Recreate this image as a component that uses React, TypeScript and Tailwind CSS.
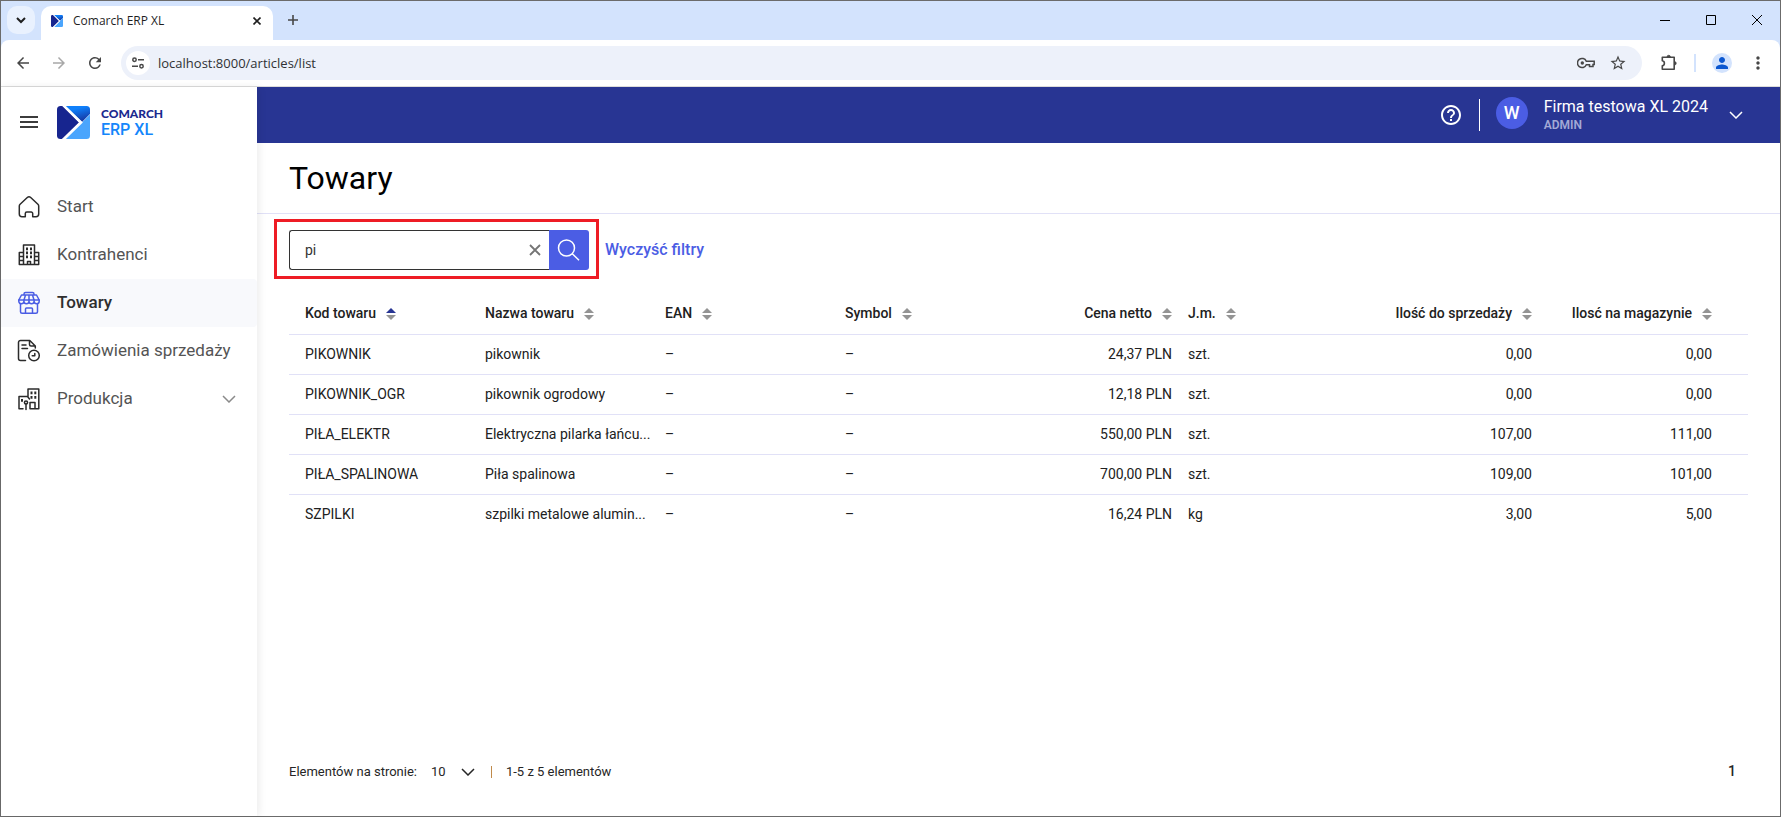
import { useState } from "react";
import type { ReactNode } from "react";
import {
  MdArrowBack,
  MdArrowForward,
  MdRefresh,
  MdStarOutline,
  MdPerson,
  MdMoreVert,
  MdHelpOutline,
} from "react-icons/md";

function Logo({ size }: { size: number }) {
  return (
    <svg width={size} height={size} viewBox="0 0 33 33" aria-hidden="true">
      <defs>
        <linearGradient id="logoTop" x1="0.3" y1="0" x2="0.7" y2="1">
          <stop offset="0.2" stopColor="#0f80fb" />
          <stop offset="1" stopColor="#16319a" />
        </linearGradient>
        <clipPath id="logoClip">
          <rect width="33" height="33" rx="3.5" />
        </clipPath>
      </defs>
      <g clipPath="url(#logoClip)">
        <path d="M8 0H33V8L25 16Z" fill="url(#logoTop)" />
        <path d="M8 33L33 8.500V33Z" fill="#4aa5fd" />
        <path d="M-1 -2H4L22 16.500L4 34H-1Z" fill="#17258f" />
        <path d="M4 -3L24 16.500L4 36" fill="none" stroke="#fff" strokeWidth="2.600" />
      </g>
    </svg>
  );
}

function Chevron({ className }: { className: string }) {
  return (
    <svg className={className} width="14" height="8" viewBox="0 0 14 8" fill="none" stroke="currentColor" strokeWidth="1.500" aria-hidden="true">
      <path d="M1 1L7 7L13 1" />
    </svg>
  );
}

function NavIcon({ children, className }: { children: ReactNode; className: string }) {
  return (
    <svg className={className} width="24" height="24" viewBox="0 0 24 24" fill="none" stroke="currentColor" strokeWidth="1.500" strokeLinejoin="round" strokeLinecap="round" aria-hidden="true">
      {children}
    </svg>
  );
}

const homeIcon = (
  <path d="M10.300 2.500a2.500 2.500 0 0 1 3.400 0l7.200 6.800a2.500 2.500 0 0 1 .8 1.900V19a2.700 2.700 0 0 1-2.700 2.700h-3.300V18.500a1.500 1.500 0 0 0-1.500-1.500h-4.400a1.500 1.500 0 0 0-1.500 1.500v3.200H5A2.700 2.700 0 0 1 2.300 19v-7.800a2.500 2.500 0 0 1 .8-1.900z" />
);
const officeIcon = (
  <>
    <path d="M6.500 21.500V2h11v19.500M6.500 9.500H2.300v12h19.400v-12h-4.200M2.300 13.500h4.200M2.300 17.500h4.200M17.500 13.500h4.200M17.500 17.500h4.200M10.500 21v-2.500h3V21" />
    <path d="M10 5.500v.8M14 5.500v.8M10 9.500v.8M14 9.500v.8M10 13.500v.8M14 13.500v.8" strokeWidth="2" strokeLinecap="square" />
  </>
);
const shopIcon = (
  <>
    <path d="M7 3.500V3A1.500 1.500 0 0 1 8.500 1.500h7A1.500 1.500 0 0 1 17 3v.5M4.500 4h15l2.700 5h-20.400zM8.500 4L7 9M12 4v5M15.500 4L17 9" />
    <path d="M1.800 9v1.300a2.550 2.550 0 0 0 5.100 0V9M6.900 10.300a2.550 2.550 0 0 0 5.100 0V9M12 10.300a2.550 2.550 0 0 0 5.100 0V9M17.100 10.300a2.550 2.550 0 0 0 5.100 0V9" />
    <path d="M3.500 13v7.700a1.500 1.500 0 0 0 1.500 1.500h14a1.500 1.500 0 0 0 1.500-1.500v-7.700M8.500 22v-4a1 1 0 0 1 1-1h5a1 1 0 0 1 1 1v4" />
  </>
);
const orderIcon = (
  <>
    <path d="M8.500 21.500H3.500a2 2 0 0 1-2-2v-16a2 2 0 0 1 2-2h9.300l5.500 5.500v2M12.500 1.800v3.700a1.500 1.500 0 0 0 1.500 1.500h4M5 6h4M5 9.500h5.500" />
    <circle cx="17" cy="16.500" r="5.300" />
    <path d="M17.800 14.500v2.300h-2.600" />
  </>
);
const factoryIcon = (
  <>
    <path d="M11 9.500V2h10.800v19.700H13V15.500h5v6M6 21.700H2V9.500h8.500l2 2.500M9 22.500v-6" />
    <circle cx="9" cy="15.500" r="1.600" />
    <path d="M14.500 5.500v.8M18.300 5.500v.8M14.500 10v.8M18.300 10v.8M5 13v.8" strokeWidth="2" strokeLinecap="square" />
  </>
);

const navItems = [
  { label: "Start", icon: homeIcon },
  { label: "Kontrahenci", icon: officeIcon },
  { label: "Towary", icon: shopIcon, active: true },
  { label: "Zamówienia sprzedaży", icon: orderIcon },
  { label: "Produkcja", icon: factoryIcon, expandable: true },
];

const columns = [
  { label: "Kod towaru", width: "w-[188px]", sorted: true },
  { label: "Nazwa towaru", width: "w-[180px]" },
  { label: "EAN", width: "w-[180px]" },
  { label: "Symbol", width: "w-auto" },
  { label: "Cena netto", width: "w-[163px]", right: true },
  { label: "J.m.", width: "w-[180px]" },
  { label: "Ilość do sprzedaży", width: "w-[180px]", right: true },
  { label: "Ilosć na magazynie", width: "w-[208px]", right: true },
];

const rows = [
  ["PIKOWNIK", "pikownik", "–", "–", "24,37 PLN", "szt.", "0,00", "0,00"],
  ["PIKOWNIK_OGR", "pikownik ogrodowy", "–", "–", "12,18 PLN", "szt.", "0,00", "0,00"],
  ["PIŁA_ELEKTR", "Elektryczna pilarka łańcu...", "–", "–", "550,00 PLN", "szt.", "107,00", "111,00"],
  ["PIŁA_SPALINOWA", "Piła spalinowa", "–", "–", "700,00 PLN", "szt.", "109,00", "101,00"],
  ["SZPILKI", "szpilki metalowe alumin...", "–", "–", "16,24 PLN", "kg", "3,00", "5,00"],
];

function BrowserChrome() {
  return (
    <div className="font-['Open_Sans',sans-serif]">
      <div className="flex h-[39px] items-start bg-[#d3e3fd] pt-[5px]">
        <button aria-label="Szukaj kart" className="ml-[6px] flex size-7 items-center justify-center rounded-[10px] bg-[#e9f1fe] text-[#1f1f1f]">
          <svg width="10" height="7" viewBox="0 0 10 7" fill="none" stroke="currentColor" strokeWidth="2"><path d="M1 1L5 5L9 1" /></svg>
        </button>
        <div className="ml-[6px] flex h-[34px] w-[232px] items-center rounded-t-[10px] bg-white pr-[10px] pb-[5px] pl-[10px]">
          <Logo size={12} />
          <span className="ml-[10px] flex-1 text-xs text-[#1f1f1f]">Comarch ERP XL</span>
          <button aria-label="Zamknij kartę" className="flex size-3 items-center justify-center text-[#1f1f1f]">
            <svg width="8" height="8" viewBox="0 0 8 8" stroke="currentColor" strokeWidth="1.600"><path d="M0.500 0.500L7.500 7.500M7.500 0.500L0.500 7.500" /></svg>
          </button>
        </div>
        <button aria-label="Nowa karta" className="ml-[6px] flex size-7 items-center justify-center text-[#474747]">
          <svg width="10" height="10" viewBox="0 0 10 10" stroke="currentColor" strokeWidth="1.600"><path d="M5 0V10M0 5H10" /></svg>
        </button>
        <div className="ml-auto flex h-7 text-black">
          <button aria-label="Minimalizuj" className="flex w-[46px] items-center justify-center">
            <svg width="10" height="10" viewBox="0 0 10 10" stroke="currentColor"><path d="M0 5.500H10" /></svg>
          </button>
          <button aria-label="Maksymalizuj" className="flex w-[46px] items-center justify-center">
            <svg width="10" height="10" viewBox="0 0 10 10" stroke="currentColor" fill="none"><path d="M0.500 0.500H9.500V9.500H0.500Z" /></svg>
          </button>
          <button aria-label="Zamknij" className="flex w-[46px] items-center justify-center">
            <svg width="10" height="10" viewBox="0 0 10 10" stroke="currentColor"><path d="M0 0L10 10M10 0L0 10" /></svg>
          </button>
        </div>
      </div>
      <div className="bg-[#d3e3fd]">
        <div className="flex h-[47px] items-center rounded-t-[8px] border-b border-[#dcdcdc] bg-white pr-3 pl-[13px] text-[#474747]">
          <button aria-label="Wstecz"><MdArrowBack size={18} /></button>
          <button aria-label="Dalej" className="ml-[18px] text-[#a8a8a8]"><MdArrowForward size={18} /></button>
          <button aria-label="Odśwież" className="ml-[18px]"><MdRefresh size={18} /></button>
          <div className="ml-[17px] flex h-[34px] flex-1 items-center rounded-full bg-[#edf1fa] pr-[15px] pl-[5px]">
            <button aria-label="Informacje o witrynie" className="flex size-6 items-center justify-center rounded-full bg-white">
              <svg width="12" height="12" viewBox="0 0 12 12" fill="none" stroke="currentColor" strokeWidth="1.500">
                <circle cx="2.500" cy="2.800" r="1.700" /><path d="M6 2.800H12M0 9.200H6" /><circle cx="9.500" cy="9.200" r="1.700" />
              </svg>
            </button>
            <input aria-label="Adres" defaultValue="localhost:8000/articles/list" className="ml-2 min-w-0 flex-1 bg-transparent pt-px text-[13px] text-[#303134] outline-none" />
            <button aria-label="Hasła">
              <svg width="18" height="12" viewBox="0 0 18 12" fill="none" stroke="currentColor" strokeWidth="1.500">
                <path d="M9.300 4.200H17.200V7.500H16V9.500H12.500V7.800H9.300A4.600 4.600 0 1 1 9.300 4.200Z" /><circle cx="5.300" cy="6" r="1.700" fill="currentColor" stroke="none" />
              </svg>
            </button>
            <button aria-label="Dodaj zakładkę" className="ml-[14px]"><MdStarOutline size={18} /></button>
          </div>
          <button aria-label="Rozszerzenia" className="ml-[18px]">
            <svg width="18" height="18" viewBox="0 0 18 18" fill="none" stroke="currentColor" strokeWidth="1.600" strokeLinejoin="round">
              <path d="M2.300 3.300H14.200V15.200H2.300V11.800A2.600 2.600 0 0 0 2.300 6.700Z" />
              <path d="M7 3A1.700 1.700 0 0 1 10.400 3ZM14.500 7.600A1.700 1.700 0 0 1 14.500 11Z" fill="currentColor" strokeWidth="0.800" />
            </svg>
          </button>
          <span className="ml-[16px] h-[18px] w-[2px] bg-[#d3e3fd]" />
          <button aria-label="Profil" className="ml-[16px] flex size-5 items-center justify-center rounded-full bg-[#d3e3fd] text-[#0b57d0]"><MdPerson size={18} /></button>
          <button aria-label="Menu" className="ml-[16px]"><MdMoreVert size={20} /></button>
        </div>
      </div>
    </div>
  );
}

function Sidebar() {
  return (
    <aside className="relative z-10 w-64 shrink-0 bg-white shadow-[2px_0_8px_rgba(0,0,0,0.08)]">
      <div className="flex items-start pt-[19px] pl-[19px]">
        <button aria-label="Menu" className="mt-[10px] flex w-[18px] flex-col gap-[3px]">
          <span className="h-[2px] bg-[#3c3c3c]" />
          <span className="h-[2px] bg-[#3c3c3c]" />
          <span className="h-[2px] bg-[#3c3c3c]" />
        </button>
        <span className="ml-[19px]"><Logo size={33} /></span>
        <div className="ml-[11px] font-['Lato',sans-serif]">
          <div className="text-xs leading-[15px] font-black text-[#1b2a8f]">COMARCH</div>
          <div className="font-['Roboto',sans-serif] text-base leading-[18px] font-medium text-[#1486fb]">ERP XL</div>
        </div>
      </div>
      <nav className="mt-[44px]">
        {navItems.map((item) => (
          <a
            key={item.label}
            href="#"
            className={
              item.active
                ? "flex h-12 items-center rounded-r-sm bg-[#f8f9fc] pr-[21px] pl-4 text-[17px] font-medium text-[#2f2f2f]"
                : "flex h-12 items-center pr-[21px] pl-4 text-[17px] text-[#545454]"
            }
          >
            <NavIcon className={item.active ? "text-[#4b5de4]" : "text-[#2b2b2b]"}>{item.icon}</NavIcon>
            <span className="ml-4 flex-1">{item.label}</span>
            {item.expandable && <Chevron className="text-[#8a8a8a]" />}
          </a>
        ))}
      </nav>
    </aside>
  );
}

function TopBar() {
  return (
    <header className="flex h-14 items-start bg-[#283593] pr-[37px] text-white">
      <button aria-label="Pomoc" className="mt-4 ml-auto"><MdHelpOutline size={24} /></button>
      <span className="mt-3 ml-4 h-8 w-px bg-white" />
      <span className="mt-[10px] ml-4 flex size-8 items-center justify-center rounded-full bg-[#4b5de4] text-lg font-medium">W</span>
      <div className="mt-[10px] ml-4">
        <div className="text-base leading-5">Firma testowa XL 2024</div>
        <div className="text-xs leading-4 font-semibold text-[#a3a9d6]">ADMIN</div>
      </div>
      <button aria-label="Konto" className="mt-6 ml-[21px]"><Chevron className="block" /></button>
    </header>
  );
}

function SortIcon({ sorted }: { sorted?: boolean }) {
  return (
    <svg width="10" height="12" viewBox="0 0 10 12" aria-hidden="true">
      <path d="M5 0L10 5H0Z" fill={sorted ? "#283593" : "#949494"} />
      <path d="M5 12L10 7H0Z" fill="#949494" />
    </svg>
  );
}

function ArticlesTable() {
  return (
    <table className="mt-[15px] w-full table-fixed border-collapse text-sm text-[#212121]">
      <thead>
        <tr className="border-b border-[#e1e1f7]">
          {columns.map((col, i) => (
            <th key={col.label} className={`${col.width} h-10 p-0 font-medium whitespace-nowrap ${i === 0 ? "pl-4" : "pl-2"} ${i === 7 ? "pr-9" : "pr-2"}`}>
              <button className={`flex w-full items-center gap-[10px] ${col.right ? "justify-end" : ""}`}>
                <span className="pb-[2px]">{col.label}</span>
                <SortIcon sorted={col.sorted} />
              </button>
            </th>
          ))}
        </tr>
      </thead>
      <tbody>
        {rows.map((row) => (
          <tr key={row[0]} className="border-b border-[#e1e1f7] last:border-b-0">
            {row.map((cell, i) => (
              <td key={columns[i].label} className={`h-10 p-0 whitespace-nowrap ${i === 0 ? "pl-4" : "pl-2"} ${i === 7 ? "pr-9" : "pr-2"} ${columns[i].right ? "text-right" : ""}`}>
                {cell}
              </td>
            ))}
          </tr>
        ))}
      </tbody>
    </table>
  );
}

export default function App() {
  const [query, setQuery] = useState("pi");
  return (
    <div className="flex min-h-screen flex-col border border-[#6b6b6b] bg-white font-['Roboto',sans-serif]">
      <BrowserChrome />
      <div className="flex flex-1">
        <Sidebar />
        <div className="flex min-w-0 flex-1 flex-col">
          <TopBar />
          <div className="border-b border-[#e1e1f7] px-8 pt-[15px] pb-[15px]">
            <h1 className="text-[32px] leading-10 text-black">Towary</h1>
          </div>
          <main className="flex flex-1 flex-col pr-8 pl-8">
            <div className="mt-[5px] -ml-[15px] flex items-center">
              <form className="flex border-3 border-[#ee1c25] pt-2 pr-[7px] pb-[6px] pl-3" onSubmit={(e) => e.preventDefault()}>
                <div className="flex h-10 w-[260px] items-center rounded-l-[3px] border border-r-0 border-[#333] bg-white pr-2 pl-[15px]">
                  <input aria-label="Szukaj" value={query} onChange={(e) => setQuery(e.target.value)} className="min-w-0 flex-1 bg-transparent text-sm text-[#333] outline-none" />
                  <button type="button" aria-label="Wyczyść" onClick={() => setQuery("")} className="text-[#757575]">
                    <svg width="12" height="12" viewBox="0 0 12 12" stroke="currentColor" strokeWidth="1.800"><path d="M1 1L11 11M11 1L1 11" /></svg>
                  </button>
                </div>
                <button aria-label="Szukaj towarów" className="flex size-10 items-center justify-center rounded-r-[3px] bg-[#4b5de4] text-white">
                  <svg width="24" height="24" viewBox="0 0 24 24" fill="none" stroke="currentColor" strokeWidth="1.500"><circle cx="9.500" cy="10" r="8" /><path d="M15.300 15.800L22 22.300" /></svg>
                </button>
              </form>
              <button className="ml-[6px] pt-[2px] text-base font-medium text-[#4b5de4]">Wyczyść filtry</button>
            </div>
            <ArticlesTable />
            <footer className="mt-auto flex items-center pb-[33px] text-[13px] text-[#262626]">
              <label htmlFor="page-size">Elementów na stronie:</label>
              <div className="relative ml-[14px] flex items-center">
                <select id="page-size" defaultValue="10" className="w-[44px] appearance-none bg-transparent outline-none">
                  <option>10</option>
                  <option>20</option>
                  <option>50</option>
                </select>
                <Chevron className="pointer-events-none absolute right-0" />
              </div>
              <span className="ml-4 h-3 w-px bg-[#c08a4a]" />
              <span className="ml-[14px]">1-5 z 5 elementów</span>
              <button className="mr-3 ml-auto pb-[2px] text-sm font-medium">1</button>
            </footer>
          </main>
        </div>
      </div>
    </div>
  );
}
